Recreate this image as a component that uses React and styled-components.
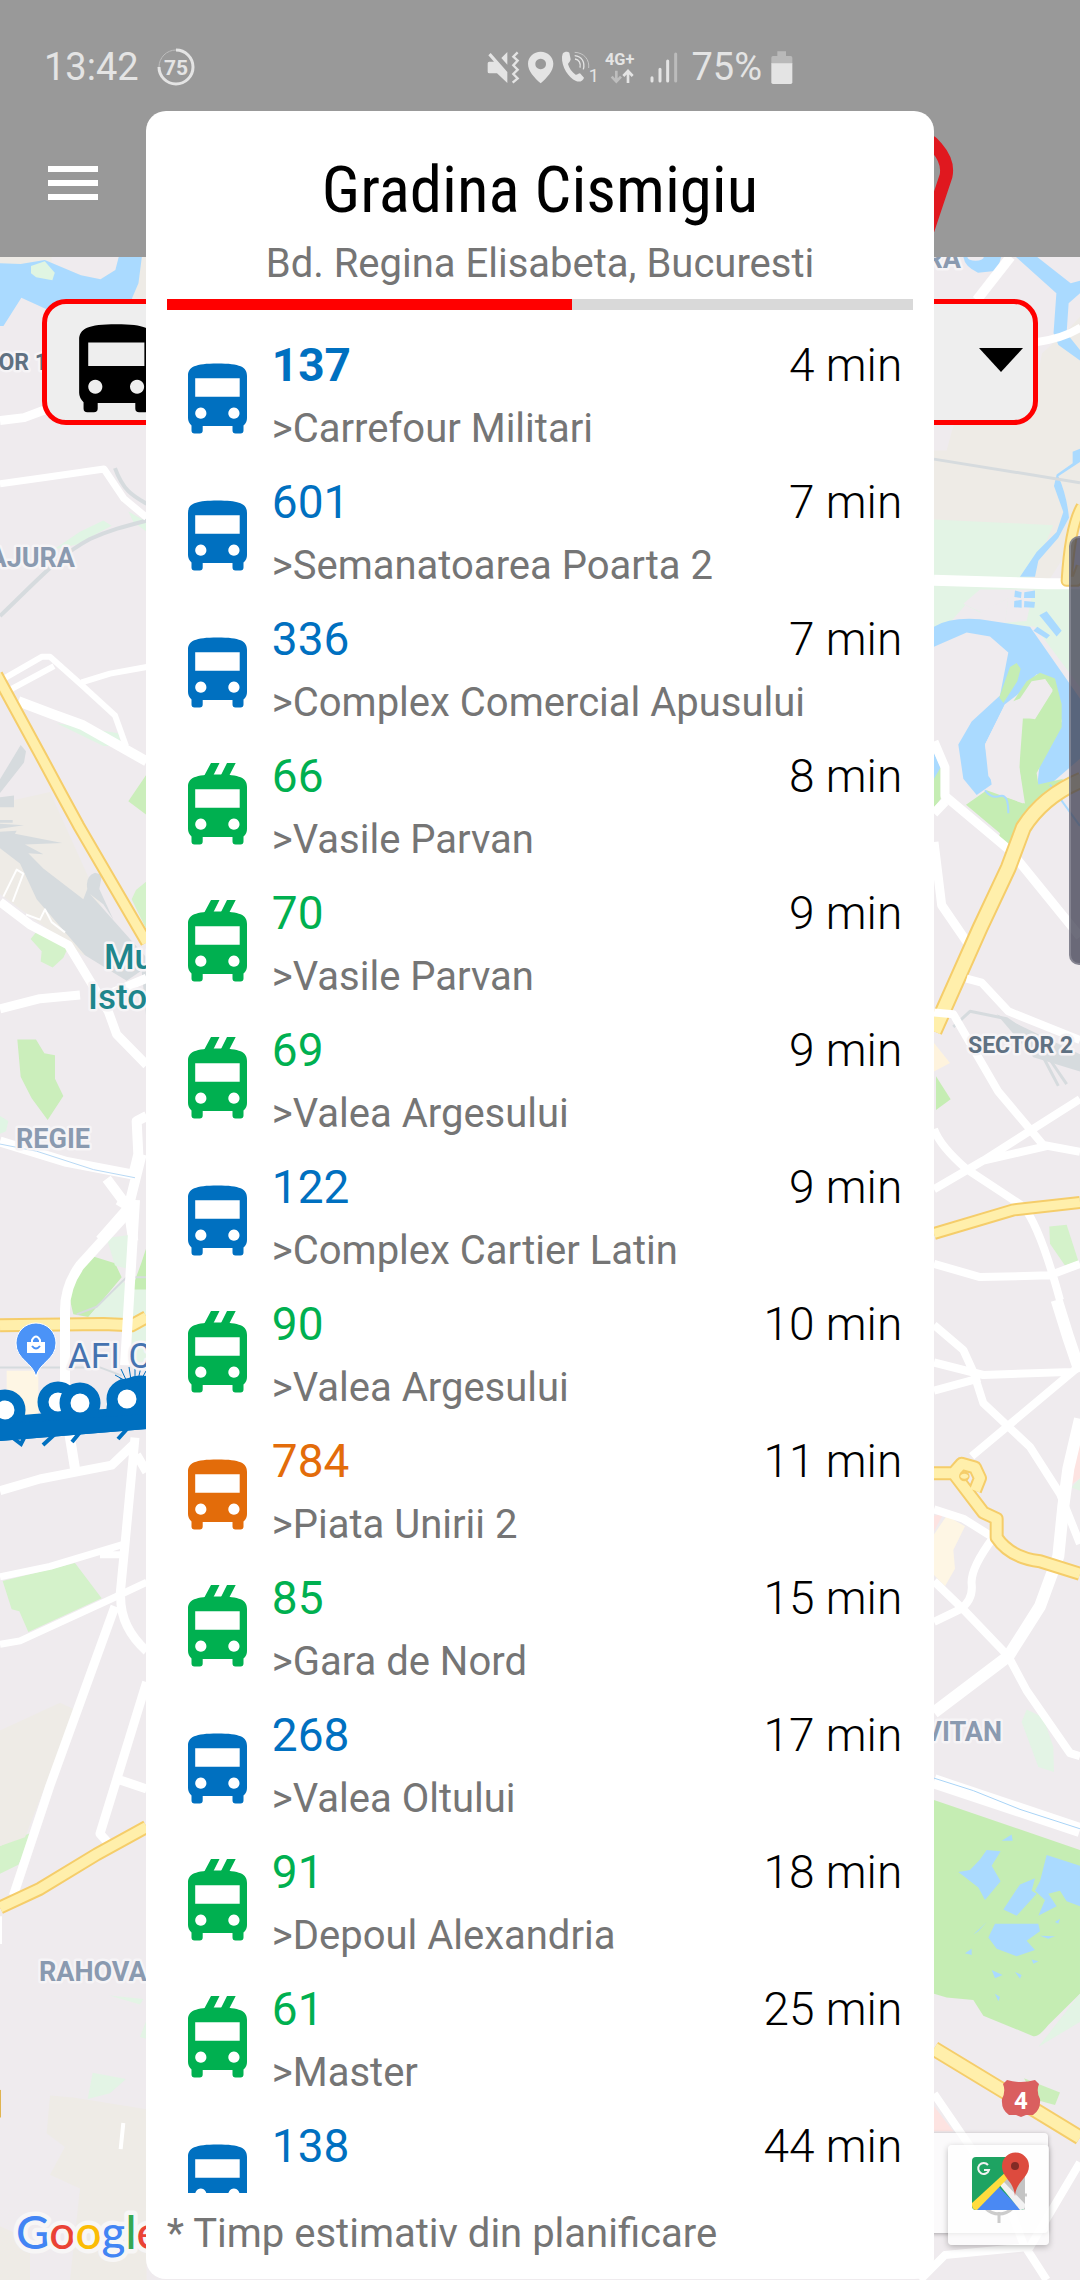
import styled, { createGlobalStyle } from "styled-components";

const BUS = "#0070c0";
const TROLLEY = "#00b050";
const REGIONAL = "#e36c0a";

const arrivals = [
  { line: "137", to: "Carrefour Militari", time: "4 min", color: BUS, live: true },
  { line: "601", to: "Semanatoarea Poarta 2", time: "7 min", color: BUS },
  { line: "336", to: "Complex Comercial Apusului", time: "7 min", color: BUS },
  { line: "66", to: "Vasile Parvan", time: "8 min", color: TROLLEY, poles: true },
  { line: "70", to: "Vasile Parvan", time: "9 min", color: TROLLEY, poles: true },
  { line: "69", to: "Valea Argesului", time: "9 min", color: TROLLEY, poles: true },
  { line: "122", to: "Complex Cartier Latin", time: "9 min", color: BUS },
  { line: "90", to: "Valea Argesului", time: "10 min", color: TROLLEY, poles: true },
  { line: "784", to: "Piata Unirii 2", time: "11 min", color: REGIONAL },
  { line: "85", to: "Gara de Nord", time: "15 min", color: TROLLEY, poles: true },
  { line: "268", to: "Valea Oltului", time: "17 min", color: BUS },
  { line: "91", to: "Depoul Alexandria", time: "18 min", color: TROLLEY, poles: true },
  { line: "61", to: "Master", time: "25 min", color: TROLLEY, poles: true },
  { line: "138", to: "", time: "44 min", color: BUS },
];

const BusIcon = ({ poles, ...props }) => (
  <svg viewBox="0 0 60 84" fill="currentColor" aria-hidden="true" {...props}>
    {poles && <path d="M23 2H31.5L24.5 16H15.5ZM39 2H47.7L40.5 16H32Z" />}
    <path
      fillRule="evenodd"
      d="M0 26C0 17 7 13.6 29.5 13.6S59 17 59 26V68Q59 73 55.5 75.5V80.5Q55.5 83.5 52.5 83.5H47.5Q44.5 83.5 44.5 80.5V76H14.7V80.5Q14.7 83.5 11.7 83.5H6.5Q3.5 83.5 3.5 80.5V75.5Q0 72 0 68ZM7.2 28.2V46.8H51.7V28.2ZM12.8 57.6a5.6 5.6 0 1 0 .01 0ZM45.9 57.6a5.6 5.6 0 1 0 .01 0Z"
    />
  </svg>
);

const StatusIcons = () => (
  <>
    <svg width="33" height="33" viewBox="20 41 99 99" fill="#e4e4e4" aria-hidden="true">
      <path d="M22 78Q22 73 27 73H41L24 54L31 47L81 104V137L50 108H27Q22 108 22 103ZM63 62L81 44V82Z" />
      <path d="M112 45L99 58L112 70L99 84L112 97L99 110L112 123L97 136" fill="none" stroke="#e4e4e4" strokeWidth="7" />
    </svg>
    <svg width="26" height="33" viewBox="143 41 78 99" fill="#e4e4e4" aria-hidden="true">
      <path fillRule="evenodd" d="M181 43C160 43 143 59 143 79C143 102 162 120 181 138C200 120 219 102 219 79C219 59 202 43 181 43ZM181 64a16 16 0 1 1-.01 0Z" />
    </svg>
    <svg width="35" height="33" viewBox="245 41 105 99" overflow="visible" aria-hidden="true">
      <path fill="#e4e4e4" d="M247 49C252 43 262 42 267 46L271 66C270 73 265 76 263 80C266 93 275 104 286 112C291 113 294 108 299 108L311 121C309 130 298 136 287 131C265 121 243 88 245 58Z" />
      <g fill="none" stroke="#e4e4e4" strokeWidth="4">
        <path d="M284 65C296 67 302 77 299 91" />
        <path d="M283 55C304 57 315 74 309 96" />
        <path d="M283 45C312 46 328 68 325 92" stroke="#c8c8c8" strokeWidth="3" />
      </g>
      <text x="325" y="134" fontSize="54" fill="#e4e4e4">1</text>
    </svg>
    <svg width="32" height="33" viewBox="374 41 96 99" overflow="visible" aria-hidden="true">
      <text x="374" y="83" fontSize="49" fontWeight="700" fill="#e4e4e4">4G+</text>
      <path d="M408 100V133M394 118L408 133L422 118" fill="none" stroke="#bebebe" strokeWidth="8" />
      <path d="M443 137V102M429 116L443 101L457 116" fill="none" stroke="#e4e4e4" strokeWidth="8" />
    </svg>
    <svg width="38" height="33" viewBox="494 41 114 99" strokeWidth="9" strokeLinecap="round" stroke="#e4e4e4" aria-hidden="true">
      <path d="M515 121V131M539 96V131M562 71V131" />
      <path d="M586 50V131" stroke="#bcbcbc" />
    </svg>
  </>
);

const Highway = ({ d, width = 9 }) => (
  <>
    <Road d={d} color="#f5cd6a" width={width + 4} />
    <Road d={d} color="#ffefab" width={width} />
  </>
);

const CityMap = () => (
  <MapCanvas viewBox="0 257 1080 2023" preserveAspectRatio="xMidYMin slice" role="img" aria-label="Harta Bucuresti">
    <rect y="257" width="1080" height="2023" fill="#efebee" />

    {/* north west */}
    <g transform="scale(.3444 .3333)">
      <path d="M0 770H440V893H0Z" fill="#eeebe6" />
      <path d="M0 893H62L150 940V1300H0Z" fill="#efebee" />
      <path d="M150 770H345L335 810L290 838L235 826L150 790Z" fill="#efebee" />
      <path d="M0 790L60 792L130 780L235 826L292 838L335 810L345 770H412L402 850L384 893L380 920L140 930L62 893L10 978H0Z" fill="#aadaff" />
      <path d="M90 798L130 784L159 818L152 841L105 832L90 820Z" fill="#e0f5e2" />
      <Road d="M0 1262L70 1253L135 1228" width={9} />
    </g>

    {/* north east */}
    <g transform="translate(440 0) scale(.4082 .3333)">
      <path d="M1475 1060L1530 1000L1568 950V1320H1250L1260 1270H1440Z" fill="#eeebe6" />
      <path d="M1282 770Q1285 800 1318 818L1365 812L1375 770Z" fill="#aadaff" />
      <ellipse cx="1312" cy="772" rx="20" ry="10" fill="#efebee" />
      <path d="M1410 770H1462L1545 850L1568 842V880L1540 910L1535 1000L1568 1050V1082L1515 1035L1503 1000L1510 880Z" fill="#aadaff" />
      <Road d="M1398 770L1315 900" width={10} />
      <Road d="M1460 1027C1510 1018 1540 1006 1570 982" width={8} />
    </g>

    {/* Pajura, Regie */}
    <g transform="translate(0 440) scale(.3333 .5102)">
      <path d="M160 215L240 180L310 158L335 168L230 205ZM385 140L440 160V180L400 160ZM170 555L355 575L365 600L310 600ZM0 1325L25 1335L18 1355L0 1360Z" fill="#e0f5e4" />
      <path d="M385 708L440 655V735ZM52 1175H108L133 1202L165 1206V1252L190 1286L143 1333L95 1290L62 1248Z" fill="#cbeebb" />
      <path d="M395 900L408 882L440 865V960ZM92 978L112 962L205 993L190 1015L158 1034L122 1022L125 1002Z" fill="#d4f2ca" />
      <path d="M0 712L150 690L350 980L250 1010L0 890Z" fill="#eeebe6" />
      <path d="M0 665L62 598L78 610L72 632L0 692ZM0 700L42 697V720L0 720ZM0 745H38V750H0ZM0 752L72 755L0 762ZM0 768L50 766L45 772L187 790L75 793L130 812L85 810L130 840L250 900L262 880Q255 855 285 848L306 852L298 880L340 940L310 910L270 890L440 1015V1140L425 1040L380 1060L255 1010L110 900L60 830L0 800Z" fill="#d6dbde" />
      <Road d="M0 345C120 270 180 225 270 194C330 176 380 168 440 158M345 55C370 100 400 110 440 125" color="#d6dbde" width={4} />
      <Road d="M0 86L140 73L312 57L372 115L440 152" width={7} />
      <Road d="M5 470L125 425H150L245 480L345 540L378 600M35 488L162 443M245 475L330 458L440 445" width={6} />
      <Road d="M55 512L160 538L245 558L440 630" width={10} />
      <Road d="M0 905L90 950L205 990L270 1060L325 1120L350 1165L440 1225M0 1115L120 1095L240 1088M330 1085L440 1055" width={9} />
      <Road d="M10 895L50 842L70 850L38 905M78 930L120 940L135 920L155 945L195 965" width={2} />
      <Road d="M0 1375L200 1415L400 1440M400 1440L415 1400L410 1335L440 1325M320 1448L385 1505L400 1570M300 1568L385 1505L425 1400" width={10} />
      <Road d="M0 1380L110 1394L280 1430L405 1446" color="#b8d9f5" width={1} />
      <Highway d="M-10 460L125 622L185 695L235 755L440 985" width={9} />
    </g>

    {/* Militari, Rahova */}
    <g transform="translate(0 1200) scale(.3333 .6888)">
      <path d="M210 145L225 110L280 82L345 92L365 112L265 170L220 166ZM395 130L425 90L440 68V140Z" fill="#c5edb3" />
      <path d="M265 170L365 116L390 130L440 130V235H395V185H300ZM320 55L400 50L385 100L345 95Z" fill="#e3f4e5" />
      <path d="M8 553L225 527L305 578L85 627L58 597L35 594ZM0 938L110 915L55 965L0 978Z" fill="#d4f2ca" />
      <path d="M0 770L180 730L225 740L75 925L0 938ZM150 1300L220 1303L440 1320V1568H210L240 1435L150 1415L195 1375L140 1355ZM0 1490L90 1510V1568H0Z" fill="#eeebe6" />
      <path d="M20 248H115V325H20Z" fill="#fef6e4" />
      <path d="M328 1155L430 1160L420 1168ZM263 1305L278 1267L378 1276L330 1297ZM420 1215L440 1190V1218Z" fill="#e3f4e5" />
      <Road d="M0 243H300L365 255M230 166L290 155L380 112H440" color="#d6dbde" width={2} />
      <Highway d="M0 182L310 180L395 182L440 170" width={10} />
      <Road d="M380 20L240 95Q195 125 195 160V300L225 390M405 0L375 240M355 0L405 15" width={10} />
      <Road d="M0 422L120 405L335 385L400 355M405 345L375 500L360 575M410 370L440 395" width={9} />
      <Road d="M0 547L150 532L370 500M300 515H370M0 645L60 640L330 580L440 555" width={7} />
      <Road d="M345 590L150 850L40 1010M362 575Q360 620 440 655M440 700L300 920L322 932M360 842L440 855" width={9} />
      <Highway d="M0 1027L120 1000L290 950L440 910" width={10} />
      <Road d="M0 1040V1080M370 1340L362 1378" width={4} />
      <rect y="1292" width="3" height="40" fill="#e0b450" />
    </g>

    {/* Herastrau and sector 2 */}
    <g transform="translate(920 400) scale(.3333 .574)">
      <path d="M42 50H480V230L380 320H42Z" fill="#eeebe6" />
      <path d="M42 45H100L80 88H42Z" fill="#efebee" />
      <path d="M42 208L400 218L330 310L480 315V500L345 395L255 390L265 345L180 370L130 355L180 328L42 420Z" fill="#e3f4e5" />
      <path d="M42 328H160L42 395Z" fill="#e3f4e5" />
      <path d="M180 330H340L320 385L255 388L265 345L185 370L130 355Z" fill="#efebee" />
      <path d="M42 395Q90 378 180 382L330 395L480 520V625L370 680L352 670L360 630L425 560L400 490L350 478L300 510L255 530L195 600L215 670L170 688L130 660L115 600L155 560L240 515L265 440L210 412L140 405L42 430Z" fill="#aadaff" />
      <path d="M410 130L458 110V90L480 85V108L415 133Q440 165 447 205L415 240L355 280L345 308H300L350 265L410 230L430 195L402 150Z" fill="#aadaff" />
      <path d="M285 332L305 335L303 345L283 343ZM313 335L345 332V345H312ZM283 350L305 348V362L282 361ZM313 350L345 352L343 362L312 361ZM358 375L380 368L425 402L410 412ZM340 402L352 395L390 410L380 416Z" fill="#aadaff" />
      <path d="M238 518L270 465L290 458L302 468L292 490L250 528ZM280 525L320 490L360 475L405 485L425 530V570L350 650L355 670L430 660L350 710L300 770L260 778L235 765L240 755L138 705L200 680L310 703L298 640V555L345 555L398 505L375 486L335 490L300 520ZM42 650L62 640V695L42 710Z" fill="#c5edb3" />
      <path d="M305 545L375 486L398 507L345 556L298 550ZM195 600L255 530L310 545L298 640L315 703L250 690L205 655Z" fill="#efebee" />
      <path d="M42 615L62 640L42 660Z" fill="#aadaff" />
      <path d="M42 1120L90 1155L42 1170Z" fill="#fef3dd" />
      <path d="M48 1178L92 1218L48 1237Z" fill="#c5edb3" />
      <path d="M388 1440L440 1437L475 1500L435 1508L390 1470Z" fill="#d4f2ca" />
      <Road d="M195 680Q215 695 240 690T265 720M390 670L480 742" color="#aadaff" width={2} />
      <Road d="M42 103L480 144M100 1092L150 1065L260 1078L480 1165M370 1145L415 1195M385 1145L440 1192" color="#d6dbde" width={3} />
      <path d="M230 1070L480 1140V1170L340 1145Z" fill="#d6dbde" />
      <Road d="M42 314L380 320H480" width={11} />
      <Highway d="M485 185Q450 220 440 315H470L485 290" width={8} />
      <Road d="M42 595L75 640V690L270 785L480 935M75 700L42 720M42 770L65 880L150 952" width={9} />
      <Highway d="M42 1100L180 920L265 815L310 745Q370 690 485 662" width={13} />
      <Road d="M140 1008L185 1015L265 1065L480 1115M42 1067L100 1070L150 1120L235 1205L370 1298L480 1310M42 1375L190 1325L480 1218M190 1325L380 1300M42 1270Q60 1300 140 1340L310 1405Q360 1440 420 1568M42 1505L180 1528L390 1525L480 1505" width={8} />
      <Highway d="M42 1452L280 1411L480 1398" width={9} />
    </g>

    {/* Vitan, Vacaresti */}
    <g transform="translate(920 1300) scale(.3333 .625)">
      <path d="M42 800L480 880V1110L385 1160Q355 1180 340 1178L190 1145L160 1120L80 1116L42 1110Z" fill="#c5edb3" />
      <path d="M305 675L320 655L370 668L400 715L402 755L355 747ZM355 1195L480 1110V1155ZM455 300L480 285V305Z" fill="#e3f4e5" />
      <path d="M460 260L480 230V285L455 295ZM42 1290L100 1330H42ZM42 345L70 342L42 370Z" fill="#fde3e1" />
      <path d="M42 375L80 345L135 362L100 400L105 430L75 458L42 440Z" fill="#fef6e4" />
      <path d="M312 1245L420 1268L405 1288L350 1280Z" fill="#cbeebb" />
      <path d="M180 895L200 880L242 882L215 905L242 930L195 960L175 940L115 915L150 912ZM245 865L275 855L278 865ZM250 975L300 935L345 925L335 945L350 950L290 985ZM355 985L375 960L345 945L360 930L380 888L480 905V970L440 962L420 945L385 950L410 970ZM205 1020L225 998L355 998L360 1010L320 1025L345 1040L290 1050L230 1038ZM160 1015L200 995L175 1010ZM135 1045L155 1038V1048ZM215 1072L248 1080L225 1085ZM225 1110L240 1115L235 1122ZM285 1075L305 1080L300 1086ZM360 1017L405 1018L385 1022ZM395 1035L420 1037ZM405 995L420 990L415 998ZM335 1055L355 1058L340 1062Z" fill="#aadaff" />
      <Road d="M42 40L130 80L160 115L190 165L330 235L420 310L480 390M42 100L190 120L460 115M42 145L180 125M155 250L480 105" width={8} />
      <Road d="M410 0L445 60L480 115M480 190L445 270L430 330L415 410L360 490L265 570L42 660" width={12} />
      <Road d="M42 450L130 495L265 570L320 625L450 725L480 730M42 335L130 350L220 380Q150 430 155 455T120 495L42 515" width={8} />
      <Highway d="M42 277H100L190 340L230 350V380Q270 412 360 418L480 438M100 277L125 262L165 268L180 285L165 305" width={10} />
      <ellipse cx="133" cy="282" rx="14" ry="6" fill="#ffefab" stroke="#f5cd6a" strokeWidth="4" />
      <Road d="M42 770L480 848" width={14} />
      <Road d="M42 765L160 785L300 815L480 846" color="#a9d4f7" width={1} />
      <Road d="M42 1270L260 1440L310 1510L380 1568M0 1568L75 1528L330 1515L480 1380" width={8} />
      <Highway d="M42 1198L240 1262L480 1340" width={12} />
    </g>

    {/* selected route with its stops */}
    <path d="M0 1417L34 1414L147 1406V1429L0 1441Z" fill="#0070c0" />
    <path d="M124 1384L120 1378M128 1384L121 1369M131 1380L129 1367M135 1380V1368M138 1380L141 1367M141 1380L146 1371M124 1380L115 1375" stroke="#0070c0" strokeWidth="1" fill="none" />
    <path d="M13 1438L21 1444L24 1438M55 1434L43 1445M81 1431L72 1442M127 1429L118 1439" stroke="#0070c0" strokeWidth="4" fill="none" />
    <path d="M107 1420C102 1392 124 1372 147 1376V1420Z" fill="#0070c0" />
    <g fill="#fff" stroke="#0070c0" strokeWidth="11">
      <circle cx="5" cy="1410" r="15" />
      <circle cx="58" cy="1402" r="15" />
      <circle cx="80" cy="1403" r="15" />
      <circle cx="127" cy="1399" r="15" />
    </g>
    <path d="M0 1424L147 1414V1429L0 1441Z" fill="#0070c0" />

    {/* shopping pin */}
    <path d="M36 1377C33 1362 16 1360 16 1343A20 20 0 0 1 56 1343C56 1360 39 1362 36 1377Z" fill="#4b93f7" stroke="#fff" strokeWidth="1" />
    <path d="M27 1342H45V1353H27Z" fill="#fff" />
    <path d="M32 1343V1340Q36 1333 40 1340V1343" fill="none" stroke="#fff" strokeWidth="2" />
    <path d="M32 1346Q36 1351 40 1346" fill="none" stroke="#4b93f7" strokeWidth="2" />

    {/* road shield */}
    <path d="M1007 2080Q1021 2084 1035 2080L1039 2084Q1036 2091 1040 2099Q1041 2110 1033 2115H1026L1021 2117L1016 2115H1009Q1001 2110 1002 2099Q1006 2091 1003 2084Z" fill="#da5f5f" />
    <Label x="1021" y="2109" size={24} color="#fff" halo="none" textAnchor="middle">4</Label>

    <Label x="48" y="370" size={23} color="#5f7182" textAnchor="end">SECTOR 1</Label>
    <Label x="961" y="268" size={27} textAnchor="end">RA</Label>
    <Label x="75" y="567" size={27} textAnchor="end">PAJURA</Label>
    <Label x="16" y="1148" size={27}>REGIE</Label>
    <Label x="39" y="1981" size={27}>RAHOVA</Label>
    <Label x="1002" y="1741" size={27} textAnchor="end">VITAN</Label>
    <Label x="968" y="1053" size={23} color="#5f7182">SECTOR 2</Label>
    <Label x="104" y="969" size={35} color="#1f868c" weight={500}>Mu</Label>
    <Label x="88" y="1009" size={35} color="#1f868c" weight={500}>Isto</Label>
    <Label x="68" y="1368" size={35} color="#4573b0" weight={400}>AFI C</Label>
    <Brand x="16" y="2249">
      <tspan fill="#4285f4">G</tspan>
      <tspan fill="#ea4335">o</tspan>
      <tspan fill="#fbbc05">o</tspan>
      <tspan fill="#4285f4">g</tspan>
      <tspan fill="#34a853">l</tspan>
      <tspan fill="#ea4335">e</tspan>
    </Brand>
  </MapCanvas>
);

const MapsLogo = () => (
  <svg width="60" height="72" viewBox="970 2152 60 72" aria-hidden="true">
    <g fill="none" stroke="#ccc" strokeWidth="3">
      <circle cx="999" cy="2195" r="19" />
      <path d="M999 2212V2223M972 2195H976M1022 2195H1027" />
    </g>
    <path d="M976 2157H1021Q1025 2157 1025 2161V2206Q1025 2210 1021 2210H976Q972 2210 972 2206V2161Q972 2157 976 2157Z" fill="#1ea362" />
    <path d="M999 2184L1025 2157V2210Z" fill="#c4c4c4" />
    <path d="M975 2210L999 2187L1021 2210Z" fill="#4a89f3" />
    <path d="M998 2183L1003 2181L1025 2204V2206Q1025 2210 1020 2210Z" fill="#f2f2f2" />
    <path d="M972 2203L1008 2170L1011 2175L977 2210Q972 2210 972 2205Z" fill="#ffdc3e" />
    <path d="M988 2165A5.500 5.500 0 1 0 989 2170H984" fill="none" stroke="#f2f2f2" strokeWidth="2" />
    <path d="M1015 2196C1014 2181 1002 2178 1002 2166A13 13 0 0 1 1029 2166C1029 2178 1016 2181 1015 2196Z" fill="#dd4b3e" />
    <circle cx="1015" cy="2166" r="4" fill="#822b25" />
  </svg>
);

const App = () => {
  return (
    <Screen>
      <GlobalStyle />
      <Header>
        <StatusBar>
          <StatusGroup gap={18}>
            <span>13:42</span>
            <svg width="38" height="38" viewBox="0 0 38 38" aria-hidden="true">
              <circle cx="19" cy="19" r="17" fill="none" stroke="#bdbdbd" strokeWidth="1" />
              <path d="M19 2A17 17 0 1 1 2 19" fill="none" stroke="#e4e4e4" strokeWidth="3" />
              <text x="19" y="27" fontSize="21" fontWeight="700" fill="#e4e4e4" textAnchor="middle">75</text>
            </svg>
          </StatusGroup>
          <StatusGroup gap={8}>
            <StatusIcons />
            <span>75%</span>
            <svg width="24" height="33" viewBox="872 41 72 99" aria-hidden="true">
              <path d="M894 42H920V56H934Q939 56 939 61V80H876V61Q876 56 881 56H894Z" fill="#b9b9b9" />
              <path d="M876 78H939V135Q939 140 934 140H881Q876 140 876 135Z" fill="#e4e4e4" />
            </svg>
          </StatusGroup>
        </StatusBar>
        <AppBar>
          <MenuButton type="button" aria-label="Meniu">
            <MenuLine />
            <MenuLine />
            <MenuLine />
          </MenuButton>
          <svg width="60" height="110" viewBox="900 122 60 110" aria-hidden="true">
            <path d="M900 128Q925 126 937 142Q949 156 946 170L928 224" fill="none" stroke="#e0181f" strokeWidth="13" />
          </svg>
        </AppBar>
      </Header>

      <MapArea>
        <CityMap />
        <LinePicker type="button" aria-haspopup="listbox" aria-label="Alege linia">
          <BusIcon width="76" height="106" />
          <svg width="44" height="24" viewBox="0 0 44 24" aria-hidden="true">
            <path d="M0 0H44L22 24Z" />
          </svg>
        </LinePicker>
        <EdgeHandle />
        <MapToolbar />
        <MapsButton type="button" aria-label="Google Maps">
          <MapsLogo />
        </MapsButton>
      </MapArea>

      <Overlay>
        <Dialog role="dialog" aria-labelledby="stop-name">
          <StopName id="stop-name">Gradina Cismigiu</StopName>
          <Address>Bd. Regina Elisabeta, Bucuresti</Address>
          <Refresh value="54.3" max="100" aria-label="Actualizare" />
          <ArrivalList>
            {arrivals.map(({ line, to, time, color, live, poles }) => (
              <Arrival key={line}>
                <Vehicle color={color}>
                  <BusIcon poles={poles} width="60" height="84" />
                </Vehicle>
                <Details>
                  <LineRow>
                    <LineNumber color={color} live={live}>{line}</LineNumber>
                    <Time>{time}</Time>
                  </LineRow>
                  <Destination>{to && `>${to}`}</Destination>
                </Details>
              </Arrival>
            ))}
          </ArrivalList>
          <Note>* Timp estimativ din planificare</Note>
        </Dialog>
      </Overlay>
    </Screen>
  );
};

export default App;

const drop = (...names) => ({ shouldForwardProp: (prop) => !names.includes(prop) });

const GlobalStyle = createGlobalStyle`
  * {
    box-sizing: border-box;
  }

  body {
    margin: 0;
    font-family: Roboto, "Liberation Sans", sans-serif;
  }
`;

const Screen = styled.div`
  position: relative;
  display: flex;
  flex-direction: column;
  height: 100vh;
  overflow: hidden;
`;

const Header = styled.header`
  background: #999;
`;

const StatusBar = styled.div`
  display: flex;
  justify-content: space-between;
  padding: 47px 286px 24px 44px;
  font-size: 38px;
  line-height: 40px;
  color: #e4e4e4;
`;

const StatusGroup = styled("div").withConfig(drop("gap"))`
  display: flex;
  align-items: center;
  gap: ${({ gap }) => gap}px;
`;

const AppBar = styled.div`
  display: flex;
  align-items: center;
  justify-content: space-between;
  height: 146px;
  padding: 0 120px 2px 48px;
`;

const MenuButton = styled.button`
  display: flex;
  flex-direction: column;
  gap: 8px;
  width: 50px;
  padding: 0;
  border: 0;
  background: none;
`;

const MenuLine = styled.span`
  height: 6px;
  background: #fff;
`;

const MapArea = styled.main`
  position: relative;
  flex: 1;
  overflow: hidden;
`;

const MapCanvas = styled.svg`
  position: absolute;
  inset: 0;
  width: 100%;
  height: 100%;
`;

const Road = styled("path").withConfig(drop("color", "width"))`
  fill: none;
  stroke: ${({ color }) => color || "#fff"};
  stroke-width: ${({ width }) => width}px;
  stroke-linejoin: round;
  vector-effect: non-scaling-stroke;
`;

const Label = styled("text").withConfig(drop("size", "color", "halo", "weight"))`
  font-size: ${({ size }) => size}px;
  font-weight: ${({ weight }) => weight || 700};
  fill: ${({ color }) => color || "#8a9ab0"};
  stroke: ${({ halo }) => halo || "#f6f4f6"};
  stroke-width: 5px;
  stroke-linejoin: round;
  paint-order: stroke;
`;

const Brand = styled.text`
  font-family: Lato, sans-serif;
  font-size: 46px;
  font-weight: 500;
  stroke: #f7f6f6;
  stroke-width: 9px;
  stroke-linejoin: round;
  paint-order: stroke;
`;

const LinePicker = styled.button`
  position: relative;
  display: flex;
  align-items: center;
  justify-content: space-between;
  width: calc(100% - 84px);
  height: 126px;
  margin: 42px;
  padding: 0 10px 4px 32px;
  border: 5px solid #f00;
  border-radius: 24px;
  background: #eee;
  color: #000;
`;

const EdgeHandle = styled.div`
  position: absolute;
  top: 279px;
  right: -10px;
  width: 21px;
  height: 429px;
  border: 2px solid rgba(150, 150, 160, 0.6);
  border-radius: 10px;
  background: rgba(62, 62, 80, 0.75);
`;

const MapToolbar = styled.div`
  position: absolute;
  right: 32px;
  bottom: 47px;
  width: 200px;
  height: 100px;
  border-radius: 4px;
  background: rgba(255, 255, 255, 0.75);
  box-shadow: 0 1px 4px rgba(0, 0, 0, 0.3);
`;

const MapsButton = styled.button`
  position: absolute;
  right: 31px;
  bottom: 35px;
  display: flex;
  align-items: flex-start;
  justify-content: center;
  width: 101px;
  height: 100px;
  padding: 7px 0 0 3px;
  border: 0;
  border-radius: 4px;
  background: rgba(255, 255, 255, 0.75);
  box-shadow: 0 2px 6px rgba(0, 0, 0, 0.25);
`;

const Overlay = styled.div`
  position: absolute;
  inset: 0;
  display: flex;
  justify-content: center;
  padding: 111px 0 1px;
`;

const Dialog = styled.section`
  display: flex;
  flex-direction: column;
  width: 73%;
  padding: 40px 21px 21px;
  border-radius: 20px;
  background: #fff;
`;

const StopName = styled.h1`
  margin: 0 0 11px;
  font-family: "Roboto Condensed", Roboto, sans-serif;
  font-size: 65px;
  font-weight: 400;
  line-height: 78px;
  text-align: center;
  color: #000;
`;

const Address = styled.p`
  margin: 0 0 11px;
  font-size: 40px;
  line-height: 48px;
  text-align: center;
  color: #757575;
`;

const Refresh = styled.progress`
  flex: none;
  display: block;
  width: 100%;
  height: 11px;
  border: 0;
  appearance: none;
  background: #d9d9d9;

  &::-webkit-progress-bar {
    background: #d9d9d9;
  }

  &::-webkit-progress-value {
    background: #f00;
  }
`;

const ArrivalList = styled.ul`
  flex: 1;
  min-height: 0;
  margin: 0;
  padding: 16px 11px 0 21px;
  overflow-y: auto;
  scrollbar-width: none;
  list-style: none;
`;

const Arrival = styled.li`
  display: flex;
  gap: 24px;
  padding: 12px 0 10px;
`;

const Vehicle = styled("div").withConfig(drop("color"))`
  flex: none;
  height: 96px;
  padding-top: 12px;
  color: ${({ color }) => color};
`;

const Details = styled.div`
  flex: 1;
`;

const LineRow = styled.div`
  display: flex;
  justify-content: space-between;
  margin-bottom: 13px;
  font-size: 46px;
  line-height: 54px;
`;

const LineNumber = styled("span").withConfig(drop("color", "live"))`
  font-weight: ${({ live }) => (live ? 700 : 400)};
  color: ${({ color }) => color};
`;

const Time = styled.span`
  font-weight: 300;
  color: #000;
`;

const Destination = styled.div`
  min-height: 48px;
  font-size: 40px;
  line-height: 48px;
  white-space: nowrap;
  color: #757575;
`;

const Note = styled.p`
  margin: 17px 0 0;
  font-size: 40px;
  line-height: 48px;
  color: #757575;
`;
